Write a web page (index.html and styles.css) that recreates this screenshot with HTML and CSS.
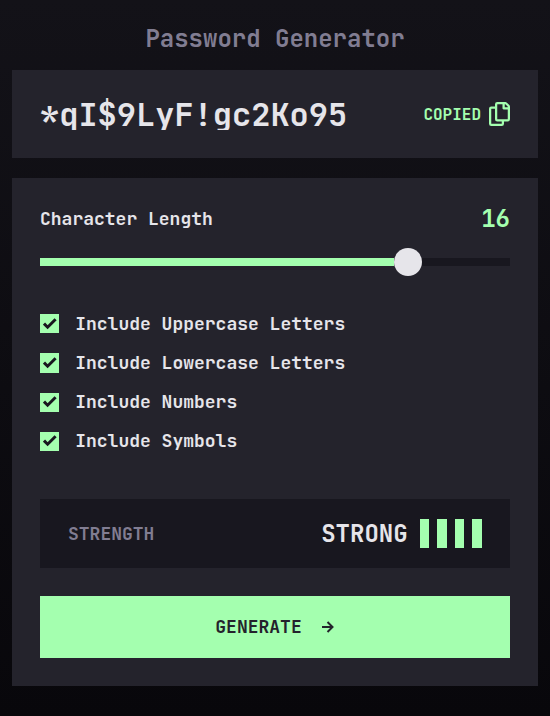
FILE: index.html
```html
<!DOCTYPE html>
<html lang="en">
<head>
<meta charset="utf-8">
<title>Password Generator</title>
<link rel="stylesheet" href="styles.css">
</head>
<body>
<main class="app">
  <h1 class="title">Password Generator</h1>
  <section class="card output">
    <div class="password">*qI$9LyF!gc2Ko95</div>
    <div class="copy">
      <span class="copied">COPIED</span>
      <svg class="copy-icon" width="21" height="24" viewBox="0 0 21 24"><path d="M20.341 3.091 17.909.659A2.25 2.25 0 0 0 16.319 0H8.25A2.25 2.25 0 0 0 6 2.25V4.5H2.25A2.25 2.25 0 0 0 0 6.75v15A2.25 2.25 0 0 0 2.25 24h10.5A2.25 2.25 0 0 0 15 21.75V19.5h3.75A2.25 2.25 0 0 0 21 17.25V4.682a2.25 2.25 0 0 0-.659-1.591ZM12.469 21.75H2.53a.281.281 0 0 1-.281-.281V7.03a.281.281 0 0 1 .281-.281H6v10.5a2.25 2.25 0 0 0 2.25 2.25h4.5v1.969a.282.282 0 0 1-.281.281Zm6-4.5H8.53a.281.281 0 0 1-.281-.281V2.53a.281.281 0 0 1 .281-.281H13.5v4.125c0 .621.504 1.125 1.125 1.125h4.125v9.469a.282.282 0 0 1-.281.281Zm.281-12h-3V2.25h.451c.075 0 .147.03.2.082L18.667 4.6a.283.283 0 0 1 .082.199v.451Z"/></svg>
    </div>
  </section>
  <section class="card settings">
    <div class="length">
      <span class="length-label">Character Length</span>
      <span class="count">16</span>
    </div>
    <div class="slider"><div class="fill"></div><div class="thumb"></div></div>
    <ul class="options">
      <li><span class="check"><svg width="14" height="12" viewBox="0 0 14 12"><path d="m1 5.6 3.6 3.6L12.6 1.2"/></svg></span><span>Include Uppercase Letters</span></li>
      <li><span class="check"><svg width="14" height="12" viewBox="0 0 14 12"><path d="m1 5.6 3.6 3.6L12.6 1.2"/></svg></span><span>Include Lowercase Letters</span></li>
      <li><span class="check"><svg width="14" height="12" viewBox="0 0 14 12"><path d="m1 5.6 3.6 3.6L12.6 1.2"/></svg></span><span>Include Numbers</span></li>
      <li><span class="check"><svg width="14" height="12" viewBox="0 0 14 12"><path d="m1 5.6 3.6 3.6L12.6 1.2"/></svg></span><span>Include Symbols</span></li>
    </ul>
    <div class="strength">
      <span class="strength-label">STRENGTH</span>
      <div class="rating"><span class="rating-text">STRONG</span><div class="bars"><i></i><i></i><i></i><i></i></div></div>
    </div>
    <button class="generate"><span>GENERATE</span><svg class="arrow" width="12" height="12" viewBox="0 0 12 12"><path d="M0 6h10.5M5.5 1l5 5-5 5"/></svg></button>
  </section>
</main>
</body>
</html>
```
FILE: styles.css
```css
*{box-sizing:border-box}
body{margin:0;min-height:716px;background:linear-gradient(#131218,#08070b);font-family:"JetBrains Mono","DejaVu Sans Mono","Liberation Mono",monospace;font-weight:600;color:#e6e5ea}
.app{padding:21px 12px 30px}
.title{height:36px;line-height:36px;margin:0 0 13px;text-align:center;color:#817d92;font-size:24px;font-weight:600}
.card{background:#24232c}
.output{height:88px;padding:0 28px;display:flex;align-items:center;justify-content:space-between;margin-bottom:20px}
.password{font-size:32px;line-height:34px;height:32px;overflow:hidden}
.copy{display:flex;align-items:center;gap:8px;color:#a4ffaf;font-size:16px}
.copy-icon{fill:#a4ffaf}
.settings{height:508px;padding:23px 28px 28px;font-size:18px}
.length{height:34px;display:flex;align-items:center;justify-content:space-between}
.count{color:#a4ffaf;font-size:24px}
.slider{height:28px;margin-top:13px;display:flex;align-items:center;background:linear-gradient(#18171f,#18171f) center/100% 8px no-repeat}
.fill{width:354px;height:8px;background:#a4ffaf}
.thumb{width:28px;height:28px;border-radius:50%;background:#e6e5ea}
.options{list-style:none;padding:0;margin:35.8px 0 0;height:187.2px;display:grid;gap:15.2px;align-content:start}
.options li{height:24px;line-height:24px;display:flex;align-items:center;gap:16px}
.check{width:19.2px;height:19.2px;background:#a4ffaf;display:grid;place-items:center}
.check path{fill:none;stroke:#18171f;stroke-width:3}
.strength{height:69px;background:#18171f;padding:0 28px;display:flex;align-items:center;justify-content:space-between;margin-bottom:28px}
.strength-label{color:#817d92}
.rating{display:flex;align-items:center;gap:12px;font-size:24px;line-height:32px}
.rating-text{padding-top:2px}
.bars{display:flex;gap:8px}
.bars i{width:9.6px;height:29px;background:#a4ffaf}
.generate{width:100%;height:62px;border:0;padding:0 1px 0 0;background:#a4ffaf;color:#24232c;display:flex;align-items:center;justify-content:center;gap:20px;font:600 18px "JetBrains Mono","DejaVu Sans Mono",monospace}
.arrow path{fill:none;stroke:#24232c;stroke-width:2}
```
